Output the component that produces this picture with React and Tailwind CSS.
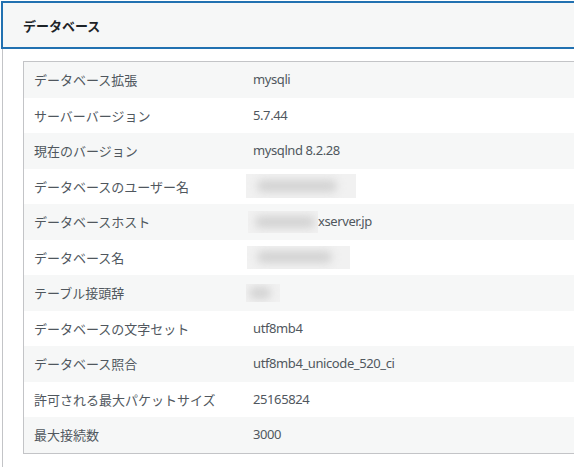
import React from "react";

const Blur = ({ w, h, inner }) => (
  <div className="relative overflow-hidden bg-[#f1f1f1]" style={{ width: w, height: h }}>
    <div
      className="absolute top-1/2 -translate-y-1/2 left-[10%] h-[12px] rounded-full bg-[#d2d2d2] blur-[4px]"
      style={{ width: inner }}
    />
  </div>
);

const rows = [
  ["データベース拡張", "mysqli"],
  ["サーバーバージョン", "5.7.44"],
  ["現在のバージョン", "mysqlnd 8.2.28"],
  ["データベースのユーザー名", <div className="-ml-[7px]"><Blur w={110} h={24} inner={80} /></div>],
  [
    "データベースホスト",
    <div className="-ml-[5px] flex items-center">
      <Blur w={70} h={22} inner={60} />
      <span>xserver.jp</span>
    </div>,
  ],
  ["データベース名", <div className="-ml-[6px]"><Blur w={103} h={23} inner={75} /></div>],
  ["テーブル接頭辞", <div className="-ml-[7px]"><Blur w={34} h={18} inner={22} /></div>],
  ["データベースの文字セット", "utf8mb4"],
  ["データベース照合", "utf8mb4_unicode_520_ci"],
  ["許可される最大パケットサイズ", "25165824"],
  ["最大接続数", "3000"],
];

export default function App() {
  return (
    <div
      className="w-[574px] h-[467px] overflow-hidden bg-white pt-px"
      style={{ fontFamily: '"Noto Sans", "Noto Sans CJK JP", sans-serif' }}
    >
      <div className="ml-px w-[620px] h-[48px] border-2 border-[#2271b1] bg-[#f6f7f7] flex items-center pl-[20px]">
        <span className="text-[13px] font-bold text-[#1d2327] leading-none" style={{ fontFamily: '"Noto Sans CJK JP", sans-serif' }}>
          データベース
        </span>
      </div>
      <div className="ml-[2px] border-l border-[#c3c4c7] h-[420px] pt-[12px] pl-[20px]">
        <div className="w-[600px] border border-[#c3c4c7]">
          {rows.map(([label, value], i) => (
            <div
              key={i}
              className={`grid grid-cols-[219px_1fr] h-[35.5px] items-center text-[13px] text-[#50575e] ${
                i % 2 === 0 ? "bg-[#f6f7f7]" : "bg-white"
              }`}
            >
              <div className="pl-[10px]" style={{ fontFamily: '"Noto Sans CJK JP", sans-serif' }}>
                {label}
              </div>
              <div className="pl-[10px] tracking-[-0.4px]">{value}</div>
            </div>
          ))}
        </div>
      </div>
    </div>
  );
}
